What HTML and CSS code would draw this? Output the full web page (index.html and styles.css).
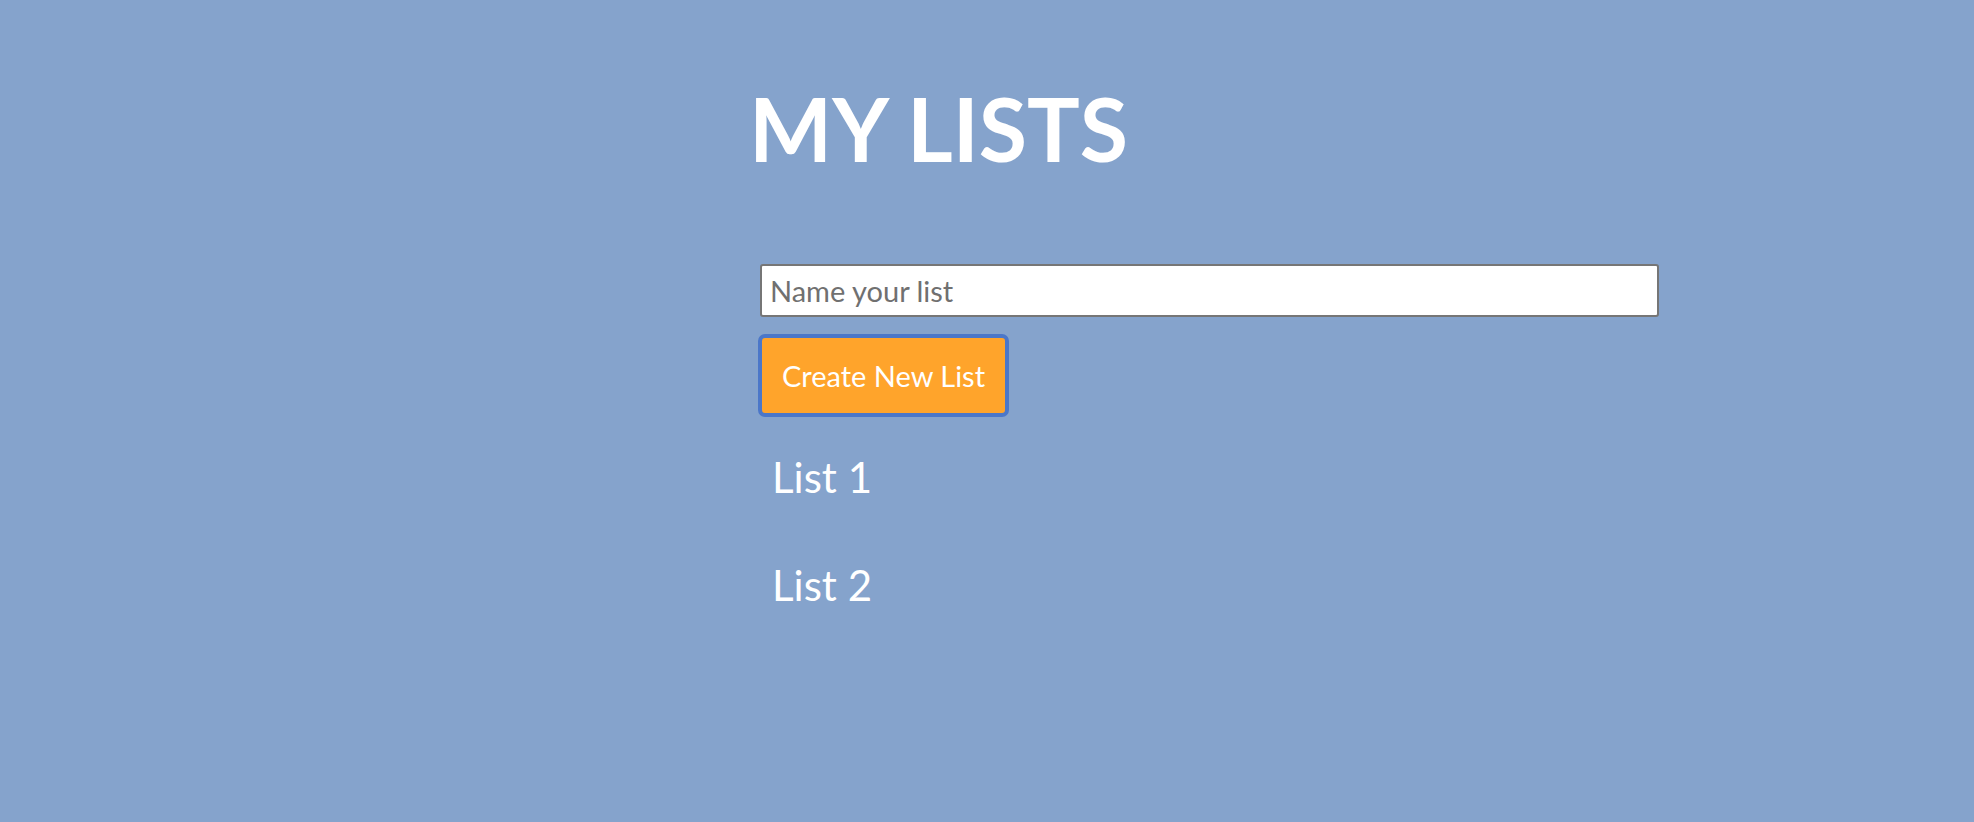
FILE: index.html
```html
<!DOCTYPE html>
<html>
<head>
<meta charset="utf-8">
<link rel="stylesheet" href="styles.css">
</head>
<body>
<main class="page">
  <h1 class="title">MY LISTS</h1>
  <form class="new-list">
    <input class="name-input" type="text" placeholder="Name your list">
    <button class="create-btn" type="button">Create New List</button>
  </form>
  <ul class="lists">
    <li class="list-item">List 1</li>
    <li class="list-item">List 2</li>
  </ul>
</main>
</body>
</html>
```
FILE: styles.css
```css
html, body {
  margin: 0;
  padding: 0;
  height: 100%;
}
body {
  background: #85a3cc;
  font-family: Lato, "Open Sans", sans-serif;
  color: #fff;
}
.page {
  padding-left: 758px;
  padding-top: 81px;
  width: 899px;
}
.title {
  margin: 0 0 0 -9px;
  font-size: 88px;
  font-weight: 700;
  line-height: 94px;
}
.new-list {
  margin-top: 89px;
  display: flex;
  flex-direction: column;
  align-items: flex-start;
  gap: 17px;
}
.name-input {
  box-sizing: border-box;
  width: 899px;
  height: 53px;
  margin-left: 2px;
  border: 2px solid #767676;
  border-radius: 3px;
  padding: 0 8px;
  font-family: inherit;
  font-size: 29px;
  color: #333;
  background: #fff;
  outline: none;
}
.name-input::placeholder {
  color: #707070;
}
.create-btn {
  box-sizing: border-box;
  width: 251px;
  height: 83px;
  border: 4px solid #4b77c9;
  border-radius: 7px;
  background: #ffa42b;
  color: #fff;
  font-family: inherit;
  font-size: 29px;
  padding: 0;
}
.lists {
  list-style: none;
  margin: 30px 0 0 0;
  padding: 0 0 0 14px;
}
.list-item {
  font-size: 42px;
  line-height: 60px;
  margin-bottom: 48px;
}
```
